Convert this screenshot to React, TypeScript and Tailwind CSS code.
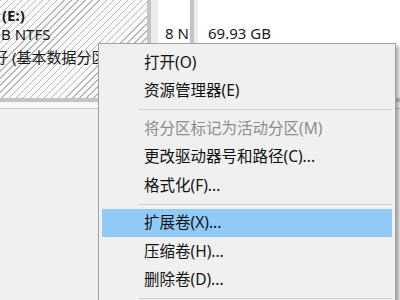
import React from "react";

const font = { fontFamily: '"Noto Sans", "Noto Sans CJK SC", sans-serif' };

type Item = { label: string; disabled?: boolean; active?: boolean } | "sep";

const items: Item[] = [
  { label: "打开(O)" },
  { label: "资源管理器(E)" },
  "sep",
  { label: "将分区标记为活动分区(M)", disabled: true },
  { label: "更改驱动器号和路径(C)..." },
  { label: "格式化(F)..." },
  "sep",
  { label: "扩展卷(X)...", active: true },
  { label: "压缩卷(H)..." },
  { label: "删除卷(D)..." },
  "sep",
];

export default function App() {
  return (
    <div
      className="relative w-[400px] h-[300px] overflow-hidden bg-[#f0f0f0] text-[#1a1a1a]"
      style={font}
    >
      {/* disk strip */}
      <div className="flex h-[98px]">
        <div className="w-[147px] overflow-hidden bg-[repeating-linear-gradient(135deg,#b8b8b8_0_1px,#fbfbfb_1px_5px)] text-[15px] leading-[18px]">
          <div className="ml-[2px] mt-[6px] whitespace-nowrap font-bold">(E:)</div>
          <div className="ml-[1px] mt-[1px] whitespace-nowrap">B NTFS</div>
          <div className="-ml-[7px] mt-[5px] whitespace-nowrap">好 (基本数据分区)</div>
        </div>
        <div className="w-[4px] bg-[#c3c3c3]" />
        <div className="w-[7px] bg-[#ececec]" />
        <div className="w-[32px] overflow-hidden bg-white text-[15px] leading-[18px]">
          <div className="ml-[7px] mt-[24px] whitespace-nowrap">8 N</div>
        </div>
        <div className="w-[4px] bg-[#c3c3c3]" />
        <div className="w-[4px] bg-[#ececec]" />
        <div className="flex-1 bg-white text-[15px] leading-[18px]">
          <div className="ml-[10px] mt-[24px] whitespace-nowrap">69.93 GB</div>
        </div>
      </div>
      <div className="h-[4px] bg-[#c4c4c4]" />
      <div className="h-[6px] bg-[#f7f7f7]" />
      <div className="h-[1px] bg-[#c8c8c8]" />

      {/* context menu */}
      <div className="absolute left-[98px] top-[43px] w-[298px] h-[280px] border border-[#a0a0a0] bg-[#f0f0f0] px-[3px] pt-[4px] shadow-[3px_3px_3px_rgba(0,0,0,0.3)]">
        {items.map((it, i) =>
          it === "sep" ? (
            <div key={i} className="h-[9px] flex items-center pl-[37px]">
              <div className="h-px w-full bg-[#d2d2d2]" />
            </div>
          ) : (
            <div
              key={i}
              className={
                "h-[28.5px] flex items-center pl-[42px] text-[15.5px] whitespace-nowrap " +
                (it.active ? "bg-[#91c9f7] " : "") +
                (it.disabled ? "text-[#8d8d8d]" : "text-[#111]")
              }
            >
              {it.label}
            </div>
          )
        )}
      </div>
    </div>
  );
}
